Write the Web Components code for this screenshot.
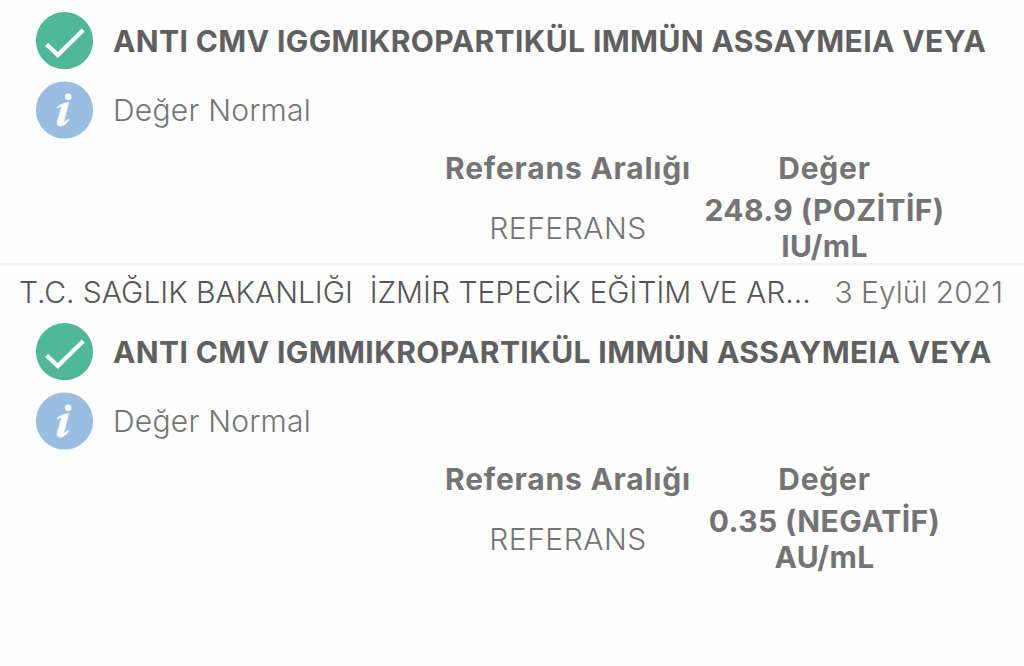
<!DOCTYPE html>
<html lang="tr">
<head>
<meta charset="utf-8">
<title>Tahlil Sonuçları</title>
<style>
body {
    margin: 0;
    background: #fefefe;
    color: #747474;
    font-family: Inter, "Liberation Sans", sans-serif;
    font-size: 30px;
    overflow: hidden;
}
</style>
</head>
<body>
<lab-results>
    <lab-result status="Değer Normal">
        <span slot="name">ANTI CMV IGGMIKROPARTIKÜL IMMÜN ASSAYMEIA VEYA</span>
        <span slot="range">REFERANS</span>
        <span slot="value">248.9 (POZİTİF)</span>
        <span slot="unit">IU/mL</span>
    </lab-result>
    <lab-visit>
        <span slot="place">T.C. SAĞLIK BAKANLIĞI  İZMİR TEPECİK EĞİTİM VE AR...</span>
        <span slot="date">3 Eylül 2021</span>
    </lab-visit>
    <lab-result status="Değer Normal">
        <span slot="name">ANTI CMV IGMMIKROPARTIKÜL IMMÜN ASSAYMEIA VEYA</span>
        <span slot="range">REFERANS</span>
        <span slot="value">0.35 (NEGATİF)</span>
        <span slot="unit">AU/mL</span>
    </lab-result>
</lab-results>

<script>
class StatusIcon extends HTMLElement {
    constructor() {
        super();
        this.attachShadow({ mode: 'open' });
    }

    get type() {
        return this.getAttribute('type');
    }

    connectedCallback() {
        this.render();
    }

    render() {
        const check = `
            <circle cx="28.5" cy="28.7" r="28.6" fill="#4eb898"/>
            <path d="M10.6 32.4 21.8 43 47.2 18" fill="none" stroke="#fff" stroke-width="4.2"/>`;
        const info = `
            <circle cx="28.5" cy="29" r="28.6" fill="#99bee1"/>
            <circle cx="32.2" cy="15.8" r="3.3" fill="#fff"/>
            <path d="M21.2 26.2C24.3 23.4 28.6 21.6 32.8 21.6L28 40C27.6 41.7 28.6 41.5 32.4 38L33 38.7C30.4 42.8 27.4 45.2 24.3 45.2C21.4 45.2 20.6 43 21.4 40L25.2 27.3C25.8 25.2 24.6 25 21.7 27.2Z" fill="#fff" stroke="#fff" stroke-width=".5"/>`;
        this.shadowRoot.innerHTML = `
            <style>
            :host { display: block; flex: none; width: 58px; height: 58px; }
            svg { display: block; width: 100%; height: 100%; overflow: visible; }
            </style>
            <svg viewBox="0 0 58 58">${this.type === 'check' ? check : info}</svg>`;
    }
}

const resultTemplate = document.createElement('template');
resultTemplate.innerHTML = `
<style>
:host {
    display: block;
    box-sizing: border-box;
    height: 263px;
    padding-top: 12px;
    white-space: nowrap;
}
.line {
    display: flex;
    align-items: center;
    gap: 19px;
    height: 58px;
    padding-left: 36px;
    margin-bottom: 11px;
}
.name {
    color: #606060;
    font-weight: 650;
    letter-spacing: 0.39px;
}
.status {
    font-weight: 300;
    letter-spacing: 0.25px;
}
.values {
    display: grid;
    grid-template-columns: 257px 256px;
    grid-template-rows: 42px 72px;
    row-gap: 3px;
    align-items: center;
    padding-left: 439.5px;
    margin-top: -3px;
    text-align: center;
    line-height: 36px;
}
.head, .value {
    font-weight: 650;
}
.head {
    letter-spacing: 0.8px;
}
.value {
    display: flex;
    flex-direction: column;
    letter-spacing: 0.4px;
}
.range {
    font-weight: 300;
    letter-spacing: 0.5px;
}
</style>
<div class="line"><status-icon type="check"></status-icon><div class="name"><slot name="name"></slot></div></div>
<div class="line"><status-icon type="info"></status-icon><div class="status"></div></div>
<div class="values">
    <div class="head">Referans Aralığı</div>
    <div class="head">Değer</div>
    <div class="range"><slot name="range"></slot></div>
    <div class="value"><slot name="value"></slot><slot name="unit"></slot></div>
</div>
`;

class LabResult extends HTMLElement {
    constructor() {
        super();
        this.attachShadow({ mode: 'open' });
        this.shadowRoot.appendChild(resultTemplate.content.cloneNode(true));
    }

    connectedCallback() {
        this.shadowRoot.querySelector('.status').textContent = this.getAttribute('status');
    }
}

const visitTemplate = document.createElement('template');
visitTemplate.innerHTML = `
<style>
:host {
    display: flex;
    justify-content: space-between;
    box-sizing: border-box;
    height: 48px;
    padding: 4px 21px 0 19px;
    border-top: 3px solid #f3f3f3;
    font-weight: 300;
    line-height: 44px;
    white-space: pre;
}
.place {
    color: #555;
    letter-spacing: -0.02px;
}
</style>
<div class="place"><slot name="place"></slot></div>
<div class="date"><slot name="date"></slot></div>
`;

class LabVisit extends HTMLElement {
    constructor() {
        super();
        this.attachShadow({ mode: 'open' });
        this.shadowRoot.appendChild(visitTemplate.content.cloneNode(true));
    }
}

class LabResults extends HTMLElement {
    constructor() {
        super();
        this.attachShadow({ mode: 'open' });
        this.shadowRoot.innerHTML = `
            <style>:host { display: flex; flex-direction: column; height: 666px; }</style>
            <slot></slot>`;
    }
}

window.customElements.define('status-icon', StatusIcon);
window.customElements.define('lab-result', LabResult);
window.customElements.define('lab-visit', LabVisit);
window.customElements.define('lab-results', LabResults);
</script>
</body>
</html>
